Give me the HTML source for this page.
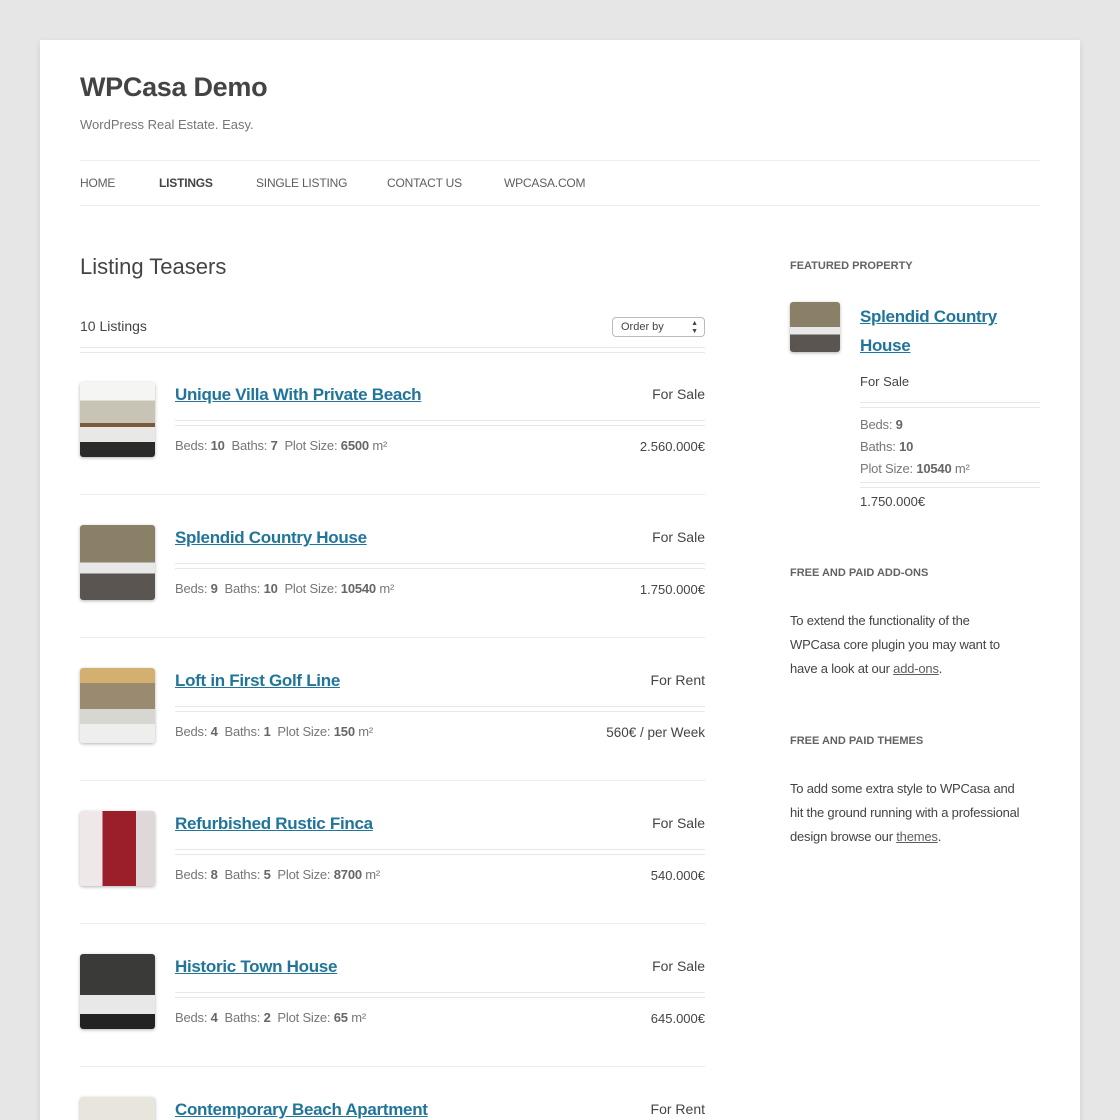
<!DOCTYPE html>
<html><head><meta charset="utf-8"><style>
html,body{margin:0;height:1120px;overflow:hidden;}
body{background:#e6e6e6;font-family:"Liberation Sans",sans-serif;color:#444;position:relative;}
.card{position:absolute;left:40px;top:40px;width:1040px;height:1100px;background:#fff;box-shadow:0 2px 6px rgba(0,0,0,.1);}
.a{position:absolute;white-space:nowrap;}
h1{position:absolute;left:80px;top:72px;margin:0;font-size:27px;color:#444;font-weight:bold;letter-spacing:-0.3px;}
.nav{font-size:12px;color:#5e5e5e;top:176px;letter-spacing:-0.2px;}
.hr{position:absolute;height:1px;background:#ededed;}
.dbl{position:absolute;height:4px;border-top:1px solid #e8e8e8;border-bottom:1px solid #e8e8e8;}
.t{font-size:17px;font-weight:bold;color:#21759b;text-decoration:underline;letter-spacing:-0.3px;}
.r{right:415px;font-size:14px;color:#444;text-align:right;}
.d{font-size:13px;color:#777;letter-spacing:-0.2px;}
.d b{color:#666;}
.thumb{position:absolute;left:80px;width:75px;height:75px;border-radius:3px;box-shadow:0 1px 3px rgba(0,0,0,.3);}
.w{font-size:11px;font-weight:bold;color:#636363;left:790px;}
.p{font-size:13px;color:#444;left:790px;line-height:24px;white-space:normal;width:232px;letter-spacing:-0.2px;}
.p u{color:#5e5e5e;}
</style></head><body>
<div class="card"></div>
<h1>WPCasa Demo</h1>
<div class="a" style="left:80px;top:117px;font-size:13px;color:#757575">WordPress Real Estate. Easy.</div>
<div class="hr" style="left:80px;width:960px;top:160px"></div>
<div class="hr" style="left:80px;width:960px;top:205px"></div>
<div class="a nav" style="left:80px">HOME</div>
<div class="a nav" style="left:159px;font-weight:bold;color:#444">LISTINGS</div>
<div class="a nav" style="left:256px">SINGLE LISTING</div>
<div class="a nav" style="left:387px">CONTACT US</div>
<div class="a nav" style="left:504px">WPCASA.COM</div>

<div class="a" style="left:80px;top:254px;font-size:22px;color:#444">Listing Teasers</div>
<div class="a" style="left:80px;top:318px;font-size:14px">10 Listings</div>
<div class="a" style="left:612px;top:317px;width:91px;height:18px;border:1px solid #bbb;border-radius:4px;font-size:11px;line-height:18px;"><span style="margin-left:8px">Order by</span><span style="position:absolute;right:6px;font-size:7px;top:0;line-height:8px;padding-top:2px">▲<br>▼</span></div>
<div class="dbl" style="left:80px;width:625px;top:347px"></div>

<div class="thumb" style="top:382px;background:linear-gradient(#f5f5f3 0 25%,#c8c3b5 25% 55%,#7a5a3a 55% 60%,#e8e8e6 60% 80%,#2a2a2a 80%)"></div>
<div class="a t" style="left:175px;top:385px">Unique Villa With Private Beach</div>
<div class="a r" style="top:386px">For Sale</div>
<div class="dbl" style="left:175px;width:530px;top:420px"></div>
<div class="a d" style="left:175px;top:438px">Beds: <b>10</b> &nbsp;Baths: <b>7</b> &nbsp;Plot Size: <b>6500</b> m²</div>
<div class="a r" style="top:439px;font-size:13px">2.560.000€</div>
<div class="hr" style="left:80px;width:625px;top:494px"></div>

<div class="thumb" style="top:525px;background:linear-gradient(#8a8068 0 50%,#e8e8e8 50% 65%,#5a5550 65%)"></div>
<div class="a t" style="left:175px;top:528px">Splendid Country House</div>
<div class="a r" style="top:529px">For Sale</div>
<div class="dbl" style="left:175px;width:530px;top:563px"></div>
<div class="a d" style="left:175px;top:581px">Beds: <b>9</b> &nbsp;Baths: <b>10</b> &nbsp;Plot Size: <b>10540</b> m²</div>
<div class="a r" style="top:582px;font-size:13px">1.750.000€</div>
<div class="hr" style="left:80px;width:625px;top:637px"></div>

<div class="thumb" style="top:668px;background:linear-gradient(#d4b070 0 20%,#9a8a70 20% 55%,#d8d6d0 55% 75%,#eeeeec 75%)"></div>
<div class="a t" style="left:175px;top:671px">Loft in First Golf Line</div>
<div class="a r" style="top:672px">For Rent</div>
<div class="dbl" style="left:175px;width:530px;top:706px"></div>
<div class="a d" style="left:175px;top:724px">Beds: <b>4</b> &nbsp;Baths: <b>1</b> &nbsp;Plot Size: <b>150</b> m²</div>
<div class="a r" style="top:725px;font-size:13.5px">560€ / per Week</div>
<div class="hr" style="left:80px;width:625px;top:780px"></div>

<div class="thumb" style="top:811px;background:linear-gradient(90deg,#f0e8e8 0 30%,#9a1f2a 30% 75%,#e0d8d8 75%)"></div>
<div class="a t" style="left:175px;top:814px">Refurbished Rustic Finca</div>
<div class="a r" style="top:815px">For Sale</div>
<div class="dbl" style="left:175px;width:530px;top:849px"></div>
<div class="a d" style="left:175px;top:867px">Beds: <b>8</b> &nbsp;Baths: <b>5</b> &nbsp;Plot Size: <b>8700</b> m²</div>
<div class="a r" style="top:868px;font-size:13px">540.000€</div>
<div class="hr" style="left:80px;width:625px;top:923px"></div>

<div class="thumb" style="top:954px;background:linear-gradient(#3a3a38 0 55%,#e8e8e8 55% 80%,#222 80%)"></div>
<div class="a t" style="left:175px;top:957px">Historic Town House</div>
<div class="a r" style="top:958px">For Sale</div>
<div class="dbl" style="left:175px;width:530px;top:992px"></div>
<div class="a d" style="left:175px;top:1010px">Beds: <b>4</b> &nbsp;Baths: <b>2</b> &nbsp;Plot Size: <b>65</b> m²</div>
<div class="a r" style="top:1011px;font-size:13px">645.000€</div>
<div class="hr" style="left:80px;width:625px;top:1066px"></div>

<div class="thumb" style="top:1097px;background:#e8e6dc"></div>
<div class="a t" style="left:175px;top:1100px">Contemporary Beach Apartment</div>
<div class="a r" style="top:1101px">For Rent</div>

<div class="a w" style="top:260px">FEATURED PROPERTY</div>
<div class="thumb" style="left:790px;top:302px;width:50px;height:50px;background:linear-gradient(#8a8068 0 50%,#e8e8e8 50% 65%,#5a5550 65%)"></div>
<div class="a t" style="left:860px;top:302px;line-height:29px;white-space:normal;width:160px">Splendid Country House</div>
<div class="a" style="left:860px;top:374px;font-size:13px">For Sale</div>
<div class="dbl" style="left:860px;width:180px;top:402px"></div>
<div class="a d" style="left:860px;top:414px;line-height:22px">Beds: <b>9</b><br>Baths: <b>10</b><br>Plot Size: <b>10540</b> m²</div>
<div class="dbl" style="left:860px;width:180px;top:482px"></div>
<div class="a" style="left:860px;top:494px;font-size:13px">1.750.000€</div>

<div class="a w" style="top:567px">FREE AND PAID ADD-ONS</div>
<div class="a p" style="top:609px">To extend the functionality of the WPCasa core plugin you may want to have a look at our <u>add-ons</u>.</div>
<div class="a w" style="top:735px">FREE AND PAID THEMES</div>
<div class="a p" style="top:777px">To add some extra style to WPCasa and hit the ground running with a professional design browse our <u>themes</u>.</div>
</body></html>
